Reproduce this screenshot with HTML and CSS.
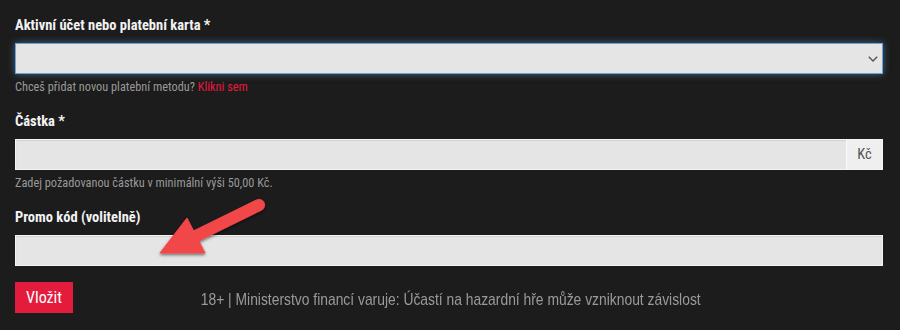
FILE: index.html
```html
<!DOCTYPE html>
<html lang="cs">
<head>
<meta charset="utf-8">
<title>Vklad</title>
<link rel="stylesheet" href="styles.css">
</head>
<body>
<form class="form">
  <div class="group">
    <label class="label">Aktivní účet nebo platební karta *</label>
    <div class="field select focused">
      <svg class="chevron" width="10" height="6" viewBox="0 0 10 6"><path d="M0.8 0.8 L5 5 L9.2 0.8" fill="none" stroke="#555" stroke-width="1.4"/></svg>
    </div>
    <p class="help">Chceš přidat novou platební metodu? <a class="link" href="#">Klikni sem</a></p>
  </div>
  <div class="group">
    <label class="label">Částka *</label>
    <div class="field addon-field">
      <span class="input-part"></span>
      <span class="addon">Kč</span>
    </div>
    <p class="help">Zadej požadovanou částku v minimální výši 50,00 Kč.</p>
  </div>
  <div class="group last">
    <label class="label">Promo kód (volitelně)</label>
    <div class="field"></div>
  </div>
  <div class="actions">
    <button type="button" class="btn">Vložit</button>
    <p class="notice">18+ | Ministerstvo financí varuje: Účastí na hazardní hře může vzniknout závislost</p>
  </div>
</form>
<svg class="arrow" width="140" height="80" viewBox="0 0 140 80">
  <defs>
    <filter id="sh" x="-20%" y="-20%" width="140%" height="140%">
      <feDropShadow dx="0" dy="1.5" stdDeviation="1.5" flood-color="#000" flood-opacity="0.55"/>
    </filter>
  </defs>
  <g filter="url(#sh)" fill="#f2474a" stroke="#f2474a">
    <line x1="119" y1="15" x2="54" y2="47" stroke-width="12" stroke-linecap="round"/>
    <polygon points="20,63 47,28 65,63" stroke-width="1" stroke-linejoin="round"/>
  </g>
</svg>
</body>
</html>
```
FILE: styles.css
```css
html, body {
  margin: 0;
  padding: 0;
  background: #1c1c1c;
}
body {
  width: 900px;
  height: 330px;
  overflow: hidden;
  position: relative;
  font-family: "Roboto Condensed", "Liberation Sans Narrow", "DejaVu Sans Condensed", Roboto, sans-serif;
}
.form {
  padding: 16px 17px 0 15px;
}
.group {
  margin-bottom: 16px;
}
.label {
  display: block;
  color: #f2f2f2;
  font-weight: 700;
  font-size: 14.5px;
  line-height: 20px;
  margin-bottom: 7px;
}
.field {
  box-sizing: border-box;
  height: 31px;
  background: #e5e5e5;
  border: 1px solid #f4f4f4;
  box-shadow: inset 0 1px 1px rgba(0,0,0,0.08);
}
.select {
  display: flex;
  align-items: center;
  justify-content: flex-end;
  padding-right: 4px;
}
.focused {
  border-color: #66a3dd;
  box-shadow: 0 0 7px rgba(102, 163, 221, 0.55);
}
.chevron {
  display: block;
  margin-top: 1px;
}
.addon-field {
  display: flex;
}
.input-part {
  flex: 1;
}
.addon {
  width: 36px;
  box-sizing: border-box;
  background: #efefef;
  border-left: 1px solid #fafafa;
  color: #555;
  font-size: 14.5px;
  display: flex;
  align-items: center;
  justify-content: center;
}
.help {
  margin: 5px 0 0;
  font-size: 12.3px;
  line-height: 17px;
  color: #999;
}
.link {
  color: #e8193d;
  text-decoration: none;
}
.actions {
  display: grid;
  align-items: center;
}
.btn {
  grid-area: 1 / 1;
  justify-self: start;
  width: 58px;
  height: 31px;
  border: 0;
  padding: 0;
  background: #e31b3c;
  color: #fff;
  font-family: inherit;
  font-size: 16px;
  font-weight: 400;
}
.notice {
  grid-area: 1 / 1;
  justify-self: center;
  margin: 4px 0 0 0;
  font-family: "Liberation Sans", Arial, sans-serif;
  font-size: 17px;
  white-space: nowrap;
  color: #9a9a9a;
  transform: scaleX(0.815);
  position: relative;
  left: 2px;
}
.arrow {
  position: absolute;
  left: 140px;
  top: 190px;
}
```
